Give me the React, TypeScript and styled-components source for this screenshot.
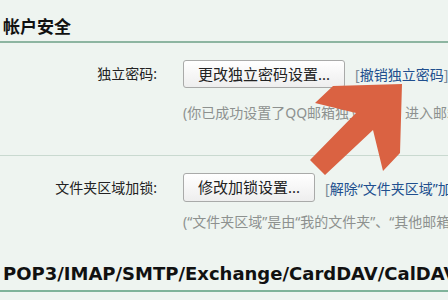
import React from 'react';
import styled, { createGlobalStyle } from 'styled-components';

const GlobalStyle = createGlobalStyle`
  html, body {
    margin: 0;
    padding: 0;
    background: #eef4f0;
    overflow: hidden;
  }
  body {
    font-family: "Noto Sans", "Noto Sans CJK SC", sans-serif;
    color: #222;
  }
`;

const Page = styled.div`
  position: relative;
  width: 448px;
  height: 300px;
  overflow: hidden;
  background: #eef4f0;
  white-space: nowrap;
`;

const SectionTitle = styled.div`
  height: 31px;
  padding: 10px 0 0 3px;
  line-height: 31px;
  font-family: "Noto Sans CJK SC", sans-serif;
  font-size: 17px;
  font-weight: bold;
  color: #111;
  border-bottom: 2px solid #8db5a1;
`;

const Block = styled.div<{ $bottom: number; $divider?: boolean }>`
  display: grid;
  grid-template-columns: 157px 1fr;
  column-gap: 26px;
  padding: 17px 0 ${(p) => p.$bottom}px 0;
  border-bottom: ${(p) => (p.$divider ? '1px solid #c9d9d0' : 'none')};
`;

const Label = styled.div<{ $h: number }>`
  text-align: right;
  font-size: 14px;
  line-height: ${(p) => p.$h}px;
  color: #222;
`;

const Controls = styled.div`
  display: flex;
  align-items: center;
  gap: 10px;
  min-width: 0;
`;

const Button = styled.button<{ $h: number }>`
  box-sizing: border-box;
  height: ${(p) => p.$h}px;
  padding: 0 14px;
  border: 1px solid #a9aaa9;
  border-radius: 3px;
  background: linear-gradient(#ffffff, #eeeeee);
  font-family: "Noto Sans", "Noto Sans CJK SC", sans-serif;
  font-size: 15px;
  color: #222;
  line-height: 1;
  flex-shrink: 0;
`;

const Link = styled.span`
  font-size: 14px;
  color: #204f8e;
  flex-shrink: 0;
`;

const Bracket = styled.span`
  color: #7d8b98;
`;

const Hint = styled.div<{ $top: number }>`
  grid-column: 2;
  margin-top: ${(p) => p.$top}px;
  font-size: 14px;
  line-height: 20px;
  color: #8d918f;
`;

const ProtocolTitle = styled.div`
  height: 28px;
  padding: 2px 0 2px 3px;
  line-height: 28px;
  font-family: "DejaVu Sans", Verdana, sans-serif;
  font-size: 18px;
  font-weight: bold;
  color: #111;
  border-bottom: 2px solid #7fb39a;
`;

const ArrowLayer = styled.svg`
  position: absolute;
  left: 0;
  top: 0;
  pointer-events: none;
`;

const Arrow = () => (
  <ArrowLayer width="448" height="300" viewBox="0 0 448 300">
    <polygon
      points="402,84 333,86 315,103 356,113 310,160 325,175 373,130 383,171 400,153"
      fill="#da6242"
    />
  </ArrowLayer>
);

export default function App() {
  return (
    <Page>
      <GlobalStyle />
      <SectionTitle>帐户安全</SectionTitle>
      <Block $bottom={32} $divider>
        <Label $h={28}>独立密码:</Label>
        <Controls>
          <Button $h={28}>更改独立密码设置...</Button>
          <Link>
            <Bracket>[</Bracket>撤销独立密码<Bracket>]</Bracket>
          </Link>
        </Controls>
        <Hint $top={15}>(你已成功设置了QQ邮箱独立密码。进入邮箱时需要输入独立密码)</Hint>
      </Block>
      <Block $bottom={26}>
        <Label $h={29}>文件夹区域加锁:</Label>
        <Controls>
          <Button $h={29}>修改加锁设置...</Button>
          <Link>
            <Bracket>[</Bracket>解除“文件夹区域”加锁<Bracket>]</Bracket>
          </Link>
        </Controls>
        <Hint $top={10}>(“文件夹区域”是由“我的文件夹”、“其他邮箱”组成)</Hint>
      </Block>
      <ProtocolTitle>POP3/IMAP/SMTP/Exchange/CardDAV/CalDAV服务</ProtocolTitle>
      <Arrow />
    </Page>
  );
}
